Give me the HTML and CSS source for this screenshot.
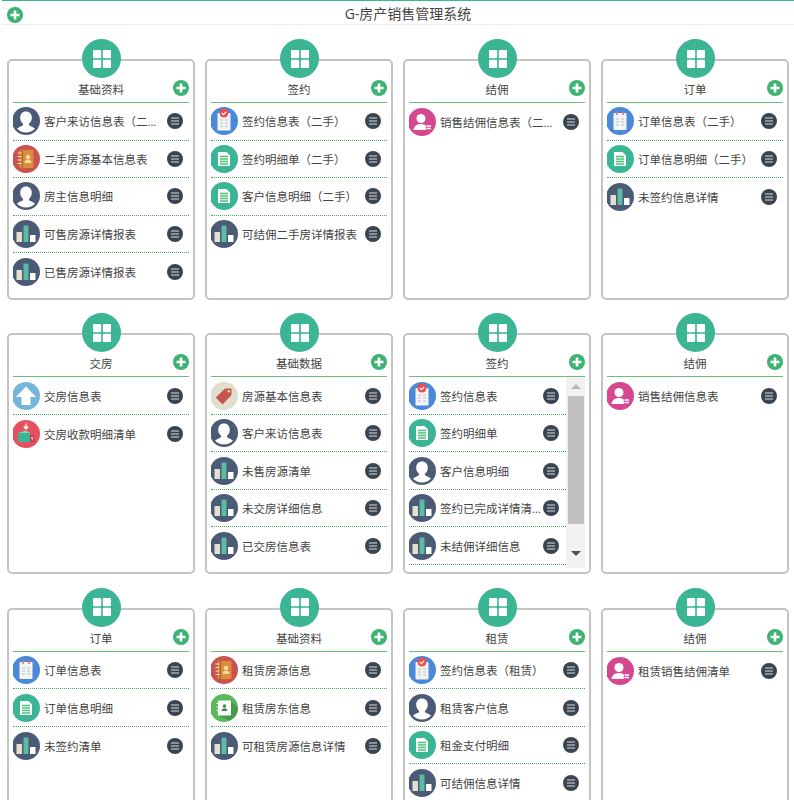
FILE: index.html
```html
<!DOCTYPE html>
<html lang="zh-CN">
<head>
  <meta charset="utf-8">
  <title>G-房产销售管理系统</title>
  <link rel="stylesheet" href="styles.css">
</head>
<body>
  <svg class="defs" width="0" height="0">
    <symbol id="i-add" viewBox="0 0 16 16">
      <circle cx="8" cy="8" r="8" fill="#3cb371"/>
      <path d="M8 3.500v9M3.500 8h9" stroke="#fff" stroke-width="2.600"/>
    </symbol>
    <symbol id="i-menu" viewBox="0 0 16 16">
      <circle cx="8" cy="8" r="8" fill="#3a4450"/>
      <path d="M4 5h8M4 8h8M4 11h8" stroke="#a2a8ad" stroke-width="1.600"/>
    </symbol>
    <symbol id="i-grid" viewBox="0 0 18 18">
      <rect x="0" y="0" width="8.200" height="8.200" rx="1" fill="#fff"/>
      <rect x="9.800" y="0" width="8.200" height="8.200" rx="1" fill="#fff"/>
      <rect x="0" y="9.800" width="8.200" height="8.200" rx="1" fill="#fff"/>
      <rect x="9.800" y="9.800" width="8.200" height="8.200" rx="1" fill="#fff"/>
    </symbol>
    <symbol id="i-user" viewBox="0 0 28 28">
      <circle cx="14" cy="14" r="14" fill="#4b5b76"/>
      <path d="M14 4.500c-3.600 0-5.800 2.700-5.800 6.200 0 2.500 1.100 4.700 2.800 6v1.500c-1.500 1.300-4.700 1.800-6 3.600 2.200 2.400 5.500 3.700 9 3.700s6.800-1.300 9-3.700c-1.300-1.800-4.500-2.300-6-3.600v-1.500c1.700-1.300 2.800-3.500 2.800-6 0-3.500-2.200-6.200-5.800-6.200z" fill="#fff"/>
    </symbol>
    <symbol id="i-pink" viewBox="0 0 28 28">
      <circle cx="14" cy="14" r="14" fill="#d5488f"/>
      <circle cx="13" cy="10.500" r="4.500" fill="#fff"/>
      <path d="M5.500 22c.5-4 3.500-6 7.500-6 2 0 3.500.5 4.800 1.500V22z" fill="#fff"/>
      <path d="M18.500 18h4.500M18.500 20.500h4.500" stroke="#fff" stroke-width="1.400"/>
    </symbol>
    <symbol id="i-chart" viewBox="0 0 28 28">
      <circle cx="14" cy="14" r="14" fill="#4b5b76"/>
      <rect x="4.500" y="12" width="5.500" height="10" rx=".5" fill="#e3e0cf"/>
      <rect x="11.500" y="5.500" width="5" height="16.500" rx=".5" fill="#5cbba4"/>
      <rect x="18" y="15" width="5.500" height="7" rx=".5" fill="#fff"/>
    </symbol>
    <symbol id="i-book" viewBox="0 0 28 28">
      <circle cx="14" cy="14" r="14" fill="#c9534f"/>
      <rect x="7.500" y="5" width="14" height="18" rx="1" fill="#dd8c3c"/>
      <rect x="9.500" y="5" width="1.500" height="18" fill="#a9642c"/>
      <circle cx="16" cy="12" r="2.200" fill="#f7d9a8"/>
      <path d="M12.500 18c0-2.500 1.500-3.500 3.500-3.500s3.500 1 3.500 3.500z" fill="#f7d9a8"/>
      <path d="M5.500 8h4M5.500 11.500h4M5.500 15h4M5.500 18.500h4" stroke="#f3e3c8" stroke-width="1.200"/>
    </symbol>
    <symbol id="i-contact" viewBox="0 0 28 28">
      <circle cx="14" cy="14" r="14" fill="#5cb85c"/>
      <path d="M21 6.500 28 14a14 14 0 0 1-9 12.500L8 21z" fill="#469a49"/>
      <rect x="8" y="6.500" width="13" height="15" rx="1" fill="#fff"/>
      <path d="M6.500 9.500h2.500M6.500 13h2.500M6.500 16.500h2.500" stroke="#fff" stroke-width="1.200"/>
      <circle cx="14.500" cy="12" r="1.800" fill="#3f8f45"/>
      <path d="M11.500 17c0-2 1.300-2.800 3-2.800s3 .8 3 2.800z" fill="#3f8f45"/>
    </symbol>
    <symbol id="i-sign" viewBox="0 0 28 28">
      <circle cx="14" cy="14" r="14" fill="#4a88d8"/>
      <rect x="7.500" y="6" width="13" height="17.500" rx="1" fill="#f4f4f4"/>
      <path d="M10 13h3M10 16h3M10 19h3M15 13h3M15 16h3M15 19h3" stroke="#b8c0ca" stroke-width="1.200"/>
      <circle cx="14" cy="6" r="4.500" fill="#ee4d52"/>
      <path d="M11.800 6l1.600 1.600 2.800-2.800" stroke="#fff" stroke-width="1.200" fill="none"/>
    </symbol>
    <symbol id="i-order" viewBox="0 0 28 28">
      <circle cx="14" cy="14" r="14" fill="#4a88d8"/>
      <rect x="7.500" y="6" width="13" height="17" rx="1" fill="#f4f4f4"/>
      <path d="M11 4.500v3.500M17 4.500v3.500" stroke="#ee6d72" stroke-width="1.600"/>
      <path d="M10 12h3M10 15h3M10 18h3M15 12h3M15 15h3M15 18h3" stroke="#b8c0ca" stroke-width="1.200"/>
    </symbol>
    <symbol id="i-doc" viewBox="0 0 28 28">
      <circle cx="14" cy="14" r="14" fill="#3cb595"/>
      <path d="M8 7h8.500L20 10.500V21H8z" fill="#fff"/>
      <path d="M10 11.500h8M10 14h8M10 16.500h8M10 19h8" stroke="#4cc07a" stroke-width="1.500"/>
    </symbol>
    <symbol id="i-up" viewBox="0 0 28 28">
      <circle cx="14" cy="14" r="14" fill="#75b6da"/>
      <path d="M14 4.500 24 15h-5.500v8h-9v-8H4z" fill="#fff"/>
    </symbol>
    <symbol id="i-pay" viewBox="0 0 28 28">
      <circle cx="14" cy="14" r="14" fill="#e6505f"/>
      <path d="M14 3.500v5M11.800 6.500l2.200 2.500 2.200-2.500" stroke="#fff" stroke-width="1.300" fill="none"/>
      <path d="M6 13h12v9H6z" fill="#3cb595"/>
      <path d="M6 13l8-2.500 4 2.500z" fill="#7fd5bd"/>
      <path d="M18 15h4.500v7H18z" fill="#c43b49"/>
      <path d="M19.200 17l1 1.500 1-1.500M20.200 18.500v2" stroke="#fff" stroke-width=".8" fill="none"/>
    </symbol>
    <symbol id="i-tag" viewBox="0 0 28 28">
      <circle cx="14" cy="14" r="14" fill="#dfdfcc"/>
      <path d="M15 6.500h6.500v6.500L12.500 22.500 5.800 15.500z" fill="#c9534f"/>
      <circle cx="18.800" cy="9.300" r="1.200" fill="#dfdfcc"/>
    </symbol>
  </svg>

  <header class="topbar">
    <button class="add-btn topbar-add" type="button"><svg><use href="#i-add"/></svg></button>
    <h1>G-房产销售管理系统</h1>
  </header>

  <main class="board">
    <!-- row 1 -->
    <section class="card">
      <div class="badge"><svg><use href="#i-grid"/></svg></div>
      <div class="card-head"><h2>基础资料</h2><button class="add-btn" type="button"><svg><use href="#i-add"/></svg></button></div>
      <ul class="rows">
        <li><svg class="ico"><use href="#i-user"/></svg><span>客户来访信息表（二手）</span><svg class="menu"><use href="#i-menu"/></svg></li>
        <li><svg class="ico"><use href="#i-book"/></svg><span>二手房源基本信息表</span><svg class="menu"><use href="#i-menu"/></svg></li>
        <li><svg class="ico"><use href="#i-user"/></svg><span>房主信息明细</span><svg class="menu"><use href="#i-menu"/></svg></li>
        <li><svg class="ico"><use href="#i-chart"/></svg><span>可售房源详情报表</span><svg class="menu"><use href="#i-menu"/></svg></li>
        <li><svg class="ico"><use href="#i-chart"/></svg><span>已售房源详情报表</span><svg class="menu"><use href="#i-menu"/></svg></li>
      </ul>
    </section>

    <section class="card">
      <div class="badge"><svg><use href="#i-grid"/></svg></div>
      <div class="card-head"><h2>签约</h2><button class="add-btn" type="button"><svg><use href="#i-add"/></svg></button></div>
      <ul class="rows">
        <li><svg class="ico"><use href="#i-sign"/></svg><span>签约信息表（二手）</span><svg class="menu"><use href="#i-menu"/></svg></li>
        <li><svg class="ico"><use href="#i-doc"/></svg><span>签约明细单（二手）</span><svg class="menu"><use href="#i-menu"/></svg></li>
        <li><svg class="ico"><use href="#i-doc"/></svg><span>客户信息明细（二手）</span><svg class="menu"><use href="#i-menu"/></svg></li>
        <li><svg class="ico"><use href="#i-chart"/></svg><span>可结佣二手房详情报表</span><svg class="menu"><use href="#i-menu"/></svg></li>
      </ul>
    </section>

    <section class="card">
      <div class="badge"><svg><use href="#i-grid"/></svg></div>
      <div class="card-head"><h2>结佣</h2><button class="add-btn" type="button"><svg><use href="#i-add"/></svg></button></div>
      <ul class="rows">
        <li><svg class="ico"><use href="#i-pink"/></svg><span>销售结佣信息表（二手）</span><svg class="menu"><use href="#i-menu"/></svg></li>
      </ul>
    </section>

    <section class="card">
      <div class="badge"><svg><use href="#i-grid"/></svg></div>
      <div class="card-head"><h2>订单</h2><button class="add-btn" type="button"><svg><use href="#i-add"/></svg></button></div>
      <ul class="rows">
        <li><svg class="ico"><use href="#i-order"/></svg><span>订单信息表（二手）</span><svg class="menu"><use href="#i-menu"/></svg></li>
        <li><svg class="ico"><use href="#i-doc"/></svg><span>订单信息明细（二手）</span><svg class="menu"><use href="#i-menu"/></svg></li>
        <li><svg class="ico"><use href="#i-chart"/></svg><span>未签约信息详情</span><svg class="menu"><use href="#i-menu"/></svg></li>
      </ul>
    </section>

    <!-- row 2 -->
    <section class="card">
      <div class="badge"><svg><use href="#i-grid"/></svg></div>
      <div class="card-head"><h2>交房</h2><button class="add-btn" type="button"><svg><use href="#i-add"/></svg></button></div>
      <ul class="rows">
        <li><svg class="ico"><use href="#i-up"/></svg><span>交房信息表</span><svg class="menu"><use href="#i-menu"/></svg></li>
        <li><svg class="ico"><use href="#i-pay"/></svg><span>交房收款明细清单</span><svg class="menu"><use href="#i-menu"/></svg></li>
      </ul>
    </section>

    <section class="card">
      <div class="badge"><svg><use href="#i-grid"/></svg></div>
      <div class="card-head"><h2>基础数据</h2><button class="add-btn" type="button"><svg><use href="#i-add"/></svg></button></div>
      <ul class="rows">
        <li><svg class="ico"><use href="#i-tag"/></svg><span>房源基本信息表</span><svg class="menu"><use href="#i-menu"/></svg></li>
        <li><svg class="ico"><use href="#i-user"/></svg><span>客户来访信息表</span><svg class="menu"><use href="#i-menu"/></svg></li>
        <li><svg class="ico"><use href="#i-chart"/></svg><span>未售房源清单</span><svg class="menu"><use href="#i-menu"/></svg></li>
        <li><svg class="ico"><use href="#i-chart"/></svg><span>未交房详细信息</span><svg class="menu"><use href="#i-menu"/></svg></li>
        <li><svg class="ico"><use href="#i-chart"/></svg><span>已交房信息表</span><svg class="menu"><use href="#i-menu"/></svg></li>
      </ul>
    </section>

    <section class="card">
      <div class="badge"><svg><use href="#i-grid"/></svg></div>
      <div class="card-head"><h2>签约</h2><button class="add-btn" type="button"><svg><use href="#i-add"/></svg></button></div>
      <div class="scroll-box">
        <ul class="rows">
          <li><svg class="ico"><use href="#i-sign"/></svg><span>签约信息表</span><svg class="menu"><use href="#i-menu"/></svg></li>
          <li><svg class="ico"><use href="#i-doc"/></svg><span>签约明细单</span><svg class="menu"><use href="#i-menu"/></svg></li>
          <li><svg class="ico"><use href="#i-user"/></svg><span>客户信息明细</span><svg class="menu"><use href="#i-menu"/></svg></li>
          <li><svg class="ico"><use href="#i-chart"/></svg><span>签约已完成详情清单</span><svg class="menu"><use href="#i-menu"/></svg></li>
          <li><svg class="ico"><use href="#i-chart"/></svg><span>未结佣详细信息</span><svg class="menu"><use href="#i-menu"/></svg></li>
          <li></li>
        </ul>
        <div class="scrollbar">
          <i class="arrow arrow-up"></i>
          <div class="scroll-thumb"></div>
          <i class="arrow arrow-down"></i>
        </div>
      </div>
    </section>

    <section class="card">
      <div class="badge"><svg><use href="#i-grid"/></svg></div>
      <div class="card-head"><h2>结佣</h2><button class="add-btn" type="button"><svg><use href="#i-add"/></svg></button></div>
      <ul class="rows">
        <li><svg class="ico"><use href="#i-pink"/></svg><span>销售结佣信息表</span><svg class="menu"><use href="#i-menu"/></svg></li>
      </ul>
    </section>

    <!-- row 3 -->
    <section class="card">
      <div class="badge"><svg><use href="#i-grid"/></svg></div>
      <div class="card-head"><h2>订单</h2><button class="add-btn" type="button"><svg><use href="#i-add"/></svg></button></div>
      <ul class="rows">
        <li><svg class="ico"><use href="#i-order"/></svg><span>订单信息表</span><svg class="menu"><use href="#i-menu"/></svg></li>
        <li><svg class="ico"><use href="#i-doc"/></svg><span>订单信息明细</span><svg class="menu"><use href="#i-menu"/></svg></li>
        <li><svg class="ico"><use href="#i-chart"/></svg><span>未签约清单</span><svg class="menu"><use href="#i-menu"/></svg></li>
      </ul>
    </section>

    <section class="card">
      <div class="badge"><svg><use href="#i-grid"/></svg></div>
      <div class="card-head"><h2>基础资料</h2><button class="add-btn" type="button"><svg><use href="#i-add"/></svg></button></div>
      <ul class="rows">
        <li><svg class="ico"><use href="#i-book"/></svg><span>租赁房源信息</span><svg class="menu"><use href="#i-menu"/></svg></li>
        <li><svg class="ico"><use href="#i-contact"/></svg><span>租赁房东信息</span><svg class="menu"><use href="#i-menu"/></svg></li>
        <li><svg class="ico"><use href="#i-chart"/></svg><span>可租赁房源信息详情</span><svg class="menu"><use href="#i-menu"/></svg></li>
      </ul>
    </section>

    <section class="card">
      <div class="badge"><svg><use href="#i-grid"/></svg></div>
      <div class="card-head"><h2>租赁</h2><button class="add-btn" type="button"><svg><use href="#i-add"/></svg></button></div>
      <ul class="rows">
        <li><svg class="ico"><use href="#i-sign"/></svg><span>签约信息表（租赁）</span><svg class="menu"><use href="#i-menu"/></svg></li>
        <li><svg class="ico"><use href="#i-user"/></svg><span>租赁客户信息</span><svg class="menu"><use href="#i-menu"/></svg></li>
        <li><svg class="ico"><use href="#i-doc"/></svg><span>租金支付明细</span><svg class="menu"><use href="#i-menu"/></svg></li>
        <li><svg class="ico"><use href="#i-chart"/></svg><span>可结佣信息详情</span><svg class="menu"><use href="#i-menu"/></svg></li>
      </ul>
    </section>

    <section class="card">
      <div class="badge"><svg><use href="#i-grid"/></svg></div>
      <div class="card-head"><h2>结佣</h2><button class="add-btn" type="button"><svg><use href="#i-add"/></svg></button></div>
      <ul class="rows">
        <li><svg class="ico"><use href="#i-pink"/></svg><span>租赁销售结佣清单</span><svg class="menu"><use href="#i-menu"/></svg></li>
      </ul>
    </section>
  </main>
</body>
</html>
```

FILE: styles.css
```css
:root {
  --green: #3cb595;
  --text: #444;
}
*, *::before, *::after { box-sizing: border-box; }
html { height: 800px; overflow: hidden; }
body { margin: 0; font-family: "Open Sans", "Noto Sans CJK SC", sans-serif; color: var(--text); background: #fff; }
.defs { display: block; height: 0; }
ul { list-style: none; margin: 0; padding: 0; }

.topbar { position: relative; height: 25px; margin-left: 2px; border-top: 1px solid var(--green); border-bottom: 1px solid #eee; text-align: center; }
.topbar h1 { margin: 0; padding-left: 20px; font-size: 14px; font-weight: 400; line-height: 25px; color: #444; }
.add-btn { display: block; width: 16px; height: 16px; padding: 0; border: 0; background: none; }
.add-btn svg { display: block; width: 16px; height: 16px; }
.topbar-add { position: absolute; left: 5px; top: 6px; }

.board { display: grid; grid-template-columns: repeat(4, 188px); grid-auto-rows: 241px; column-gap: 10px; row-gap: 33.400px; padding: 34px 0 0 7px; }
.card { position: relative; display: flex; flex-direction: column; border: 2px solid #c4c4c4; border-radius: 5px; padding: 0 4px; background: #fff; }
.badge { position: absolute; left: 73px; top: -22px; display: flex; align-items: center; justify-content: center; width: 39px; height: 39px; border-radius: 50%; background: var(--green); }
.badge svg { width: 18px; height: 18px; }

.card-head { position: relative; flex: none; height: 42px; padding-top: 21px; border-bottom: 1.500px solid #6cbf75; text-align: center; }
.card-head h2 { margin: 0; font-size: 11.500px; font-weight: 400; line-height: 16px; color: #444; }
.card-head .add-btn { position: absolute; right: 0; top: 19px; }

.rows { flex: 1; min-width: 0; min-height: 0; overflow: hidden; }
.rows li { display: flex; align-items: center; height: 37.500px; border-bottom: 1px dotted #4fa868; }
.rows li:last-child { border-bottom: 0; }
.rows .ico { flex: none; width: 28px; height: 28px; margin-left: -1px; }
.rows span { flex: 1; min-width: 0; margin-left: 4px; overflow: hidden; white-space: nowrap; text-overflow: ellipsis; font-size: 11.500px; color: #444; }
.rows .menu { flex: none; width: 16px; height: 16px; margin-right: 6px; }

.scroll-box { display: flex; flex: none; height: 191px; }
.scroll-box .menu { margin-right: 7px; }
.scrollbar { display: flex; flex: none; flex-direction: column; align-items: center; width: 19px; background: #f1f1f1; }
.scroll-thumb { width: 16px; height: 128px; background: #c1c1c1; }
.arrow { display: block; width: 0; height: 0; border-left: 5px solid transparent; border-right: 5px solid transparent; }
.arrow-up { margin: 7px 0 7px; border-bottom: 5px solid #b5b5b5; }
.arrow-down { margin: 27px 0 0; border-top: 5px solid #505050; }
```
